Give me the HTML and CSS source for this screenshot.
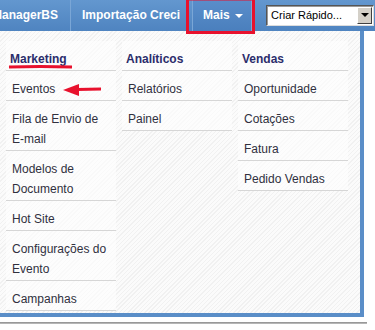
FILE: index.html
```html
<!DOCTYPE html>
<html lang="pt-BR">
<head>
  <meta charset="UTF-8" />
  <title>Menu Mais</title>
  <link rel="stylesheet" href="styles.css">
</head>
<body>
  <div class="topbar">
    <ul class="nav">
      <li class="nav-item">ManagerBS</li>
      <li class="nav-item">Importação Creci</li>
      <li class="nav-item more">Mais <span class="caret"></span></li>
    </ul>
    <div class="quick">
      <span class="quick-text">Criar Rápido...</span>
      <span class="quick-btn"><span class="tri"></span></span>
    </div>
  </div>

  <div class="menu">
    <ul class="col">
      <li class="head">Marketing</li>
      <li>Eventos</li>
      <li>Fila de Envio de E-mail</li>
      <li>Modelos de Documento</li>
      <li>Hot Site</li>
      <li>Configurações do Evento</li>
      <li>Campanhas</li>
    </ul>
    <ul class="col">
      <li class="head">Analíticos</li>
      <li>Relatórios</li>
      <li>Painel</li>
    </ul>
    <ul class="col">
      <li class="head">Vendas</li>
      <li>Oportunidade</li>
      <li>Cotações</li>
      <li>Fatura</li>
      <li>Pedido Vendas</li>
    </ul>
  </div>
  <div class="page-edge"></div>

  <!-- red marks drawn over the screenshot -->
  <svg class="marks" width="375" height="330" viewBox="0 0 375 330">
    <rect x="187.5" y="-1" width="66" height="33.5" fill="none" stroke="#e8112d" stroke-width="3" />
    <path d="M9 67 Q40 66 72 67" fill="none" stroke="#e8112d" stroke-width="3" />
    <path d="M77 89.5 L101 89" stroke="#e8112d" stroke-width="3" />
    <polygon points="63,90 79,84 79,96" fill="#e8112d" />
  </svg>
</body>
</html>
```

FILE: styles.css
```css
:root {
  font-family: "Liberation Sans", Arial, sans-serif;
  --blue: #5a8ec8;
  --navy: #2b2d6b;
}
body {
  margin: 0;
  width: 375px;
  height: 330px;
  overflow: hidden;
  background: white;
  position: relative;
}
ul {
  list-style: none;
  margin: 0;
  padding: 0;
}

/* === Top bar === */
.topbar {
  height: 31px;
  display: flex;
  align-items: center;
  background: linear-gradient(#6397cf, #4f84c0);
}
.nav {
  display: flex;
  height: 100%;
  margin-left: -19px;
}
.nav-item {
  color: white;
  font-weight: 700;
  font-size: 12px;
  line-height: 31px;
  padding: 0 12px 0 11px;
  border-right: 1px solid #7aa6d6;
  white-space: nowrap;
}
.nav-item.more {
  background: linear-gradient(#5a8ecb, #4a7fbd);
  border-left: 1px solid #7aa6d6;
  border-right: 1px solid #7aa6d6;
  padding: 0 8px 0 10px;
  margin-left: -1px;
}
.caret {
  display: inline-block;
  vertical-align: middle;
  margin-left: 2px;
  border-left: 4px solid transparent;
  border-right: 4px solid transparent;
  border-top: 4px solid white;
}
.quick {
  margin-left: 14px;
  width: 108px;
  height: 21px;
  box-sizing: border-box;
  display: flex;
  align-items: center;
  background: white;
  border: 1px solid #555;
  border-right-color: #ddd;
  border-bottom-color: #ddd;
  box-shadow: inset 1px 1px 0 #999;
  margin-top: -1px;
}
.quick-text {
  flex: 1;
  font-size: 11px;
  color: #000;
  padding-left: 4px;
}
.quick-btn {
  width: 15px;
  height: 17px;
  margin-right: 1px;
  background: #d4d0c8;
  border: 1px solid;
  border-color: #fff #404040 #404040 #fff;
  box-sizing: border-box;
  display: flex;
  align-items: center;
  justify-content: center;
}
.tri {
  border-left: 4px solid transparent;
  border-right: 4px solid transparent;
  border-top: 4px solid #000;
}

/* === Dropdown === */
.menu {
  width: 364px;
  box-sizing: border-box;
  display: flex;
  gap: 6px;
  padding: 10px 0 2px 6px;
  border-right: 4px solid var(--blue);
  border-bottom: 4px solid var(--blue);
  background: repeating-linear-gradient(-45deg, #fbfbfb 0 2px, #f1f1f1 2px 3px);
}
.col {
  width: 110px;
  align-self: flex-start;
}
.col li {
  font-size: 12px;
  line-height: 20px;
  color: #30303e;
  padding: 8px 6px 1px;
  border-bottom: 1px solid #d6d6d6;
  background: rgba(255, 255, 255, 0.6);
}
.col .head {
  font-weight: 700;
  color: var(--navy);
  padding-left: 4px;
}
.page-edge {
  width: 367px;
  height: 2px;
  margin-top: 5px;
  background: linear-gradient(#8a8a8a, #c4c4c4);
}

/* === Annotations === */
.marks {
  position: absolute;
  top: 0;
  left: 0;
  pointer-events: none;
}
```
